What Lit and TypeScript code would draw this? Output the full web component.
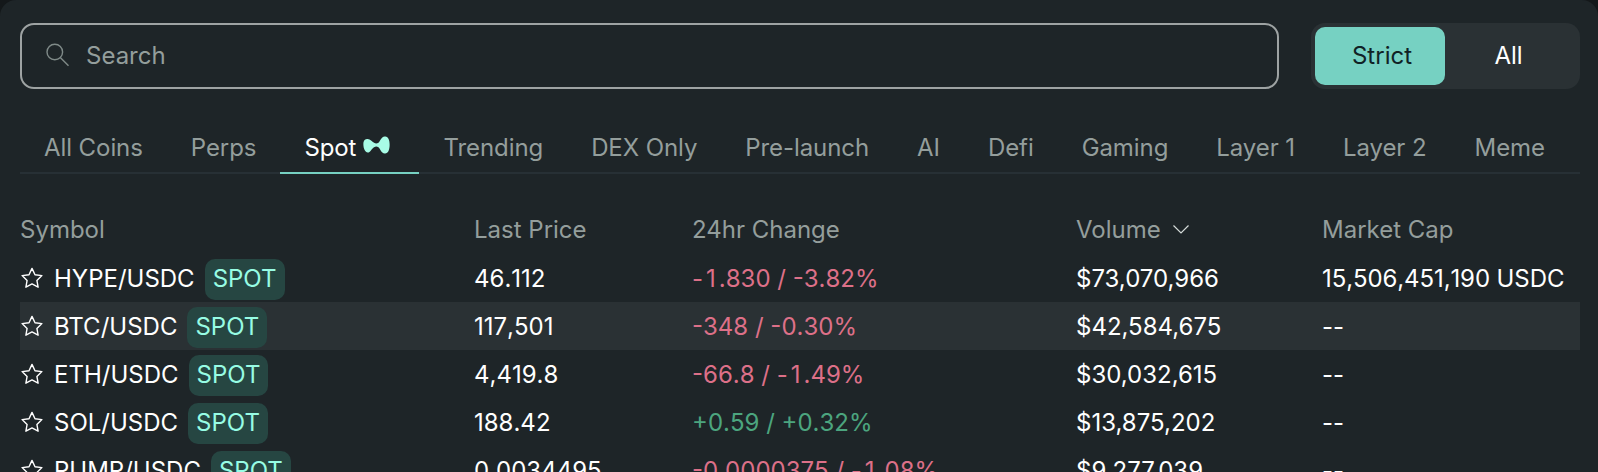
import { LitElement, html, css, svg } from 'lit';
import { customElement } from 'lit/decorators.js';

const TABS = ['All Coins', 'Perps', 'Spot', 'Trending', 'DEX Only', 'Pre-launch', 'AI', 'Defi', 'Gaming', 'Layer 1', 'Layer 2', 'Meme'];

const ROWS = [
  { sym: 'HYPE/USDC', price: '46.112', change: '-1.830 / -3.82%', up: false, vol: '$73,070,966', cap: '15,506,451,190 USDC' },
  { sym: 'BTC/USDC', price: '117,501', change: '-348 / -0.30%', up: false, vol: '$42,584,675', cap: '--', hover: true },
  { sym: 'ETH/USDC', price: '4,419.8', change: '-66.8 / -1.49%', up: false, vol: '$30,032,615', cap: '--' },
  { sym: 'SOL/USDC', price: '188.42', change: '+0.59 / +0.32%', up: true, vol: '$13,875,202', cap: '--' },
  { sym: 'PUMP/USDC', price: '0.0034495', change: '-0.0000375 / -1.08%', up: false, vol: '$9,277,039', cap: '--' },
];

const star = svg`<path d="M11 1.4l3 6.3 6.9.9-5 4.8 1.2 6.8-6.1-3.3-6.1 3.3 1.2-6.8-5-4.8 6.9-.9z" fill="none" stroke="#fff" stroke-width="1.4" stroke-linejoin="round"/>`;

// the "-1" pair sits wider in the reference than Inter sets it here
const changeText = (s: string) =>
  s.split('-1').map((part, i) => (i === 0 ? part : html`<span class="wide">-1</span>${part}`));

@customElement('app-root')
export class AppRoot extends LitElement {
  static styles = css`
    :host {
      display: block;
      width: 1598px;
      height: 472px;
      overflow: hidden;
      background: #14181a;
      font-family: Inter, 'Liberation Sans', sans-serif;
      font-size: 24px;
      color: #fff;
    }

    .panel {
      box-sizing: border-box;
      height: 472px;
      padding: 23px 18px 0 20px;
      background: #1e2528;
      border-radius: 16px 16px 0 0;
    }

    .top {
      display: flex;
      gap: 32px;
    }

    .search {
      flex: 1;
      box-sizing: border-box;
      height: 66px;
      display: flex;
      align-items: center;
      gap: 16px;
      padding: 0 0 2px 24px;
      border: 2px solid #9ea3a3;
      border-radius: 14px;
      color: #949e9c;
    }

    .toggle {
      box-sizing: border-box;
      width: 269px;
      height: 66px;
      display: flex;
      padding: 4px;
      background: #2a3134;
      border-radius: 14px;
    }

    .toggle div {
      flex: 1;
      display: flex;
      align-items: center;
      justify-content: center;
      padding-bottom: 2px;
    }

    .toggle .all {
      padding-right: 4px;
    }

    .toggle .on {
      flex: none;
      box-sizing: border-box;
      width: 130px;
      padding-left: 4px;
      background: #76d1c2;
      color: #102225;
      border-radius: 10px;
    }

    .tabs {
      display: flex;
      margin-top: 30px;
      border-bottom: 2px solid #273035;
    }

    .tab {
      height: 55px;
      box-sizing: border-box;
      display: flex;
      align-items: center;
      gap: 7px;
      padding: 4px 24px 0;
      color: #949e9c;
      letter-spacing: -0.08px;
      margin-bottom: -2px;
      border-bottom: 2px solid transparent;
    }

    .tab.on {
      color: #fff;
      border-bottom-color: #76d1c2;
    }

    .tab svg {
      margin: 0 5px 5px 0;
    }

    .grid {
      display: grid;
      grid-template-columns: 454px 218px 384px 246px 1fr;
    }

    .head {
      box-sizing: border-box;
      height: 48px;
      margin-top: 32px;
      padding-bottom: 2px;
      align-items: center;
      color: #949e9c;
    }

    .head .vol {
      display: flex;
      align-items: center;
      gap: 12px;
    }

    .row {
      height: 48px;
      align-items: center;
    }

    .row.hover {
      background: #2a3134;
    }

    .sym {
      display: flex;
      align-items: center;
    }

    .sym svg {
      flex: none;
      width: 22px;
      height: 22px;
      margin: 0 11px 0 1px;
    }

    .badge {
      margin: 3px 0 0 10px;
      box-sizing: border-box;
      height: 41px;
      display: flex;
      align-items: center;
      padding: 0 8px 3px;
      background: #264642;
      color: #97fce4;
      border-radius: 10px;
    }

    .num {
      font-kerning: none;
    }

    .cap {
      letter-spacing: -0.1px;
    }

    .wide {
      letter-spacing: 3px;
    }

    .down { color: #dd7088; }
    .up { color: #4ca57f; }
  `;

  render() {
    return html`
      <div class="panel">
        <div class="top">
          <div class="search">
            <svg width="24" height="24" viewBox="0 0 24 24" fill="none" stroke="#7f8a88" stroke-width="1.4">
              <circle cx="8.8" cy="9" r="7.8" />
              <path d="M14.5 14.7l8 8" />
            </svg>
            <span>Search</span>
          </div>
          <div class="toggle">
            <div class="on">Strict</div>
            <div class="all">All</div>
          </div>
        </div>

        <div class="tabs">
          ${TABS.map(
            (t) => html`
              <div class="tab ${t === 'Spot' ? 'on' : ''}">
                ${t}
                ${t === 'Spot'
                  ? html`<svg width="27" height="18" viewBox="0 0 27 18.500">
                      <path d="M0 8.500C0 4 2 3 4.500 3 7 3 9 6 11 7c1.500.8 3 .8 4.500 0 1.500-1 2.500-6 6.500-6.500C25.500 0 27 4 27 9s-1.500 9.300-5 9c-4-.5-4.500-5-6.500-6.500-1.500-.9-3-.9-4.500 0C9 12.500 7 17 4.500 17 2 17 0 13 0 8.500z" fill="#a8fce6" />
                    </svg>`
                  : ''}
              </div>
            `
          )}
        </div>

        <div class="grid head">
          <div>Symbol</div>
          <div>Last Price</div>
          <div>24hr Change</div>
          <div class="vol">
            Volume
            <svg width="16" height="9" viewBox="0 0 16 9" fill="none" stroke="#d5dbd9" stroke-width="1.2"><path d="M.5.5L8 8l7.500-7.500" /></svg>
          </div>
          <div>Market Cap</div>
        </div>

        ${ROWS.map(
          (r) => html`
            <div class="grid row ${r.hover ? 'hover' : ''}">
              <div class="sym">
                <svg viewBox="0 0 22 22">${star}</svg>
                ${r.sym}
                <span class="badge">SPOT</span>
              </div>
              <div class="num">${r.price}</div>
              <div class="num ${r.up ? 'up' : 'down'}">${changeText(r.change)}</div>
              <div>${r.vol}</div>
              <div class="num cap">${r.cap}</div>
            </div>
          `
        )}
      </div>
    `;
  }
}
